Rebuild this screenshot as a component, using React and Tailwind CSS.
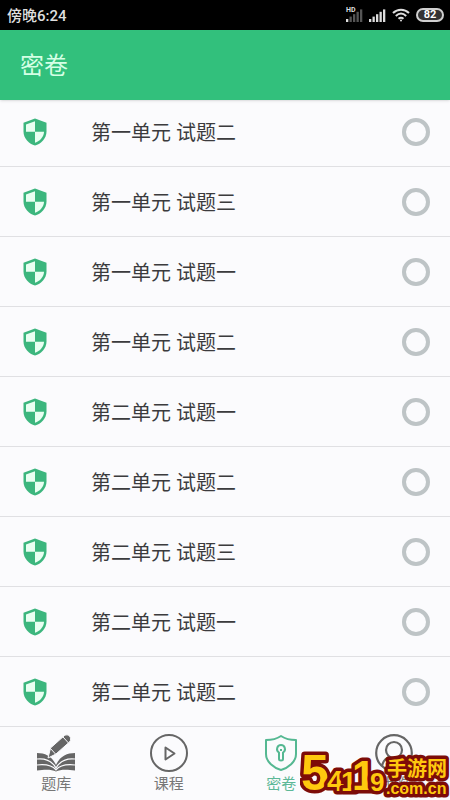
import React from "react";

const items = [
  "第一单元 试题二",
  "第一单元 试题三",
  "第一单元 试题一",
  "第一单元 试题二",
  "第二单元 试题一",
  "第二单元 试题二",
  "第二单元 试题三",
  "第二单元 试题一",
  "第二单元 试题二",
];

function Shield() {
  return (
    <svg viewBox="0 0 24 28" className="h-7 w-6 shrink-0" aria-hidden="true">
      <path d="M12 0.5L23.5 4.7V13.5C23.5 20.5 18 26 12 27.5C6 26 0.5 20.5 0.5 13.5V4.7Z" fill="#3cb67e" />
      <path d="M12 3.2V13.7H3V6.4Z" fill="#e9fff2" />
      <path d="M12 13.7H21C20.8 19 17 23 12 24.8Z" fill="#e9fff2" />
    </svg>
  );
}

function Signal({ dim }) {
  return (
    <svg viewBox="0 0 17 13" className="h-[13px] w-[17px]" aria-hidden="true">
      {[0, 1, 2, 3, 4].map((n) => (
        <rect key={n} x={n * 3.5} y={10 - n * 2.4} width="2.3" height={3 + n * 2.4} fill={dim && n > 0 ? "#555" : "#ddd"} />
      ))}
    </svg>
  );
}

function StatusBar() {
  return (
    <div className="flex h-[30px] shrink-0 items-center justify-between bg-black pr-[6px] pl-[7px] text-[#dedede]">
      <span className="pt-px text-[15px] leading-5 font-medium">傍晚6:24</span>
      <div className="flex items-center gap-[6px]">
        <div className="relative">
          <Signal dim />
          <span className="absolute -top-[2px] left-0 bg-black text-[7px] leading-[7px] font-bold">HD</span>
        </div>
        <Signal />
        <svg viewBox="0 0 18 14" className="h-[14px] w-[18px]" fill="none" stroke="#ddd" strokeWidth="2" aria-hidden="true">
          <path d="M1 5C5.5 0.5 12.5 0.5 17 5M3.8 8C7 5 11 5 14.2 8M6.5 10.8C8 9.5 10 9.5 11.5 10.8" />
          <circle cx="9" cy="12.5" r="1" fill="#ddd" stroke="none" />
        </svg>
        <span className="flex h-[14px] w-7 items-center justify-center rounded-full border-2 border-[#cfcfcf] bg-[#333] text-[11px] leading-3 font-bold text-white">82</span>
      </div>
    </div>
  );
}

function BookIcon() {
  return (
    <svg viewBox="0 0 38 38" className="h-[38px] w-[38px]" aria-hidden="true">
      <path d="M0 19C8 19 15 22 19 31C23 22 30 19 38 19V36.500C29 35 23 35.500 19 37.500C15 35.500 9 35 0 36.500Z" fill="#666" />
      <path d="M0 25C9 24 15 27 19 34C23 27 29 24 38 25M0 31C9 30 15 31 19 36C23 31 29 30 38 31" fill="none" stroke="#fbfbfd" strokeWidth="1.2" />
      <path d="M11 24L13.500 14L27.500 1.500C31-1 36 4 32.500 8L19 20Z" fill="#666" stroke="#fbfbfd" strokeWidth="1" />
      <path d="M26 3L31.500 9M13.500 14.500L18.500 20" fill="none" stroke="#fbfbfd" strokeWidth="1" />
    </svg>
  );
}

function PlayIcon() {
  return (
    <svg viewBox="0 0 38 38" className="h-[38px] w-[38px]" fill="none" stroke="#666" strokeWidth="2" strokeLinejoin="round" aria-hidden="true">
      <circle cx="19" cy="19" r="18" />
      <path d="M15.500 13.500L24.500 19.500L15.500 25.500Z" />
    </svg>
  );
}

function LockIcon() {
  return (
    <svg viewBox="0 0 38 38" className="h-[38px] w-[38px]" fill="none" stroke="#55b892" strokeWidth="2" strokeLinejoin="round" aria-hidden="true">
      <path d="M19 2C23.500 5 28 6 34 6V20C34 28 26 34 19 36C12 34 4 28 4 20V6C10 6 14.500 5 19 2Z" />
      <path d="M17 18.500C13.500 16.500 15 11 19 11C23 11 24.500 16.500 21 18.500V25C21 27 17 27 17 25Z" />
      <path d="M19 15V17" />
    </svg>
  );
}

function UserIcon() {
  return (
    <svg viewBox="0 0 38 38" className="h-[38px] w-[38px]" fill="none" stroke="#666" strokeWidth="2.2" aria-hidden="true">
      <circle cx="19" cy="19" r="17.8" />
      <circle cx="19" cy="16" r="8" />
      <path d="M7 32C8 27 11 24 15 23M31 32C30 27 27 24 23 23" />
    </svg>
  );
}

const tabs = [
  { label: "题库", Icon: BookIcon },
  { label: "课程", Icon: PlayIcon },
  { label: "密卷", Icon: LockIcon, active: true },
  { label: "我的", Icon: UserIcon },
];

function Watermark() {
  return (
    <svg
      viewBox="0 0 150 56"
      className="pointer-events-none absolute right-0 bottom-0 h-14 w-[150px] font-['Liberation_Sans','Noto_Sans_CJK_SC',sans-serif] font-bold"
      fill="#ffc90e"
      stroke="#7d0c08"
      strokeWidth="7"
      strokeLinejoin="round"
      paintOrder="stroke"
      role="img"
      aria-label="5419手游网.com.cn"
    >
      <text x="1" y="46" fontSize="50">5</text>
      <text x="27" y="47" fontSize="30">4</text>
      <text x="41" y="47" fontSize="28">1</text>
      <text x="52" y="46" fontSize="42">1</text>
      <text x="70" y="47" fontSize="26">9</text>
      <text x="87" y="32" fontSize="20">手游网</text>
      <text x="86" y="50" fontSize="16">.com.cn</text>
    </svg>
  );
}

export default function App() {
  return (
    <div className="relative flex h-screen flex-col overflow-hidden bg-[#fbfbfd] font-['Roboto','Noto_Sans_CJK_SC',sans-serif]">
      <StatusBar />
      <header className="z-10 flex h-[70px] shrink-0 items-center bg-[#32c07c] px-5 pt-px shadow-sm">
        <h1 className="text-2xl font-normal text-[#d5ffe5]">密卷</h1>
      </header>
      <main className="flex min-h-0 flex-1 flex-col justify-end overflow-hidden">
        {items.map((label, i) => (
          <label key={i} className="flex h-[70px] shrink-0 items-center border-b border-[#e0e0e3] pr-5 pl-[23px]">
            <Shield />
            <span className="ml-11 flex-1 pt-[3px] text-xl text-[#3b3b3d]">{label}</span>
            <input type="radio" name="paper" className="size-7 appearance-none rounded-full border-4 border-[#bec4c6]" />
          </label>
        ))}
      </main>
      <nav className="grid h-[73px] shrink-0 grid-cols-4">
        {tabs.map(({ label, Icon, active }) => (
          <button key={label} type="button" className={active ? "flex flex-col items-center pt-[7px] text-[#5cb897]" : "flex flex-col items-center pt-[7px] text-[#777]"}>
            <Icon />
            <span className="mt-[2px] text-[15px] leading-5">{label}</span>
          </button>
        ))}
      </nav>
      <Watermark />
    </div>
  );
}
